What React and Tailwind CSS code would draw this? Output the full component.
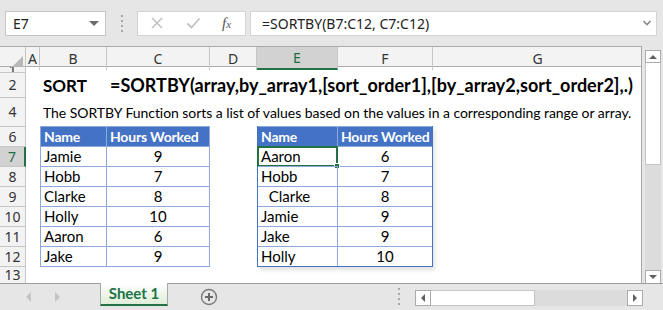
import React from 'react';

const COLS = 'grid-cols-[26px_14px_67px_103px_47px_81px_95px_209px]';
const ROWS = 'grid-rows-[6px_25px_29px_20px_20px_20px_20px_20px_20px_20px_17px]';
const ROW_LABELS = ['1', '2', '4', '6', '7', '8', '9', '10', '11', '12', '13'];
const COL_LABELS = ['A', 'B', 'C', 'D', 'E', 'F', 'G'];

const left = [
  ['Jamie', '9'],
  ['Hobb', '7'],
  ['Clarke', '8'],
  ['Holly', '10'],
  ['Aaron', '6'],
  ['Jake', '9'],
];

const right = [
  ['Aaron', '6'],
  ['Hobb', '7'],
  ['\u00a0\u00a0Clarke', '8'],
  ['Jamie', '9'],
  ['Jake', '9'],
  ['Holly', '10'],
];

const cellFont = "font-['Lato',sans-serif] text-[15px] text-black";
const headFont = "font-['Lato',sans-serif] font-bold text-[14px] tracking-[-0.2px] text-white";

function DataTable({ data, place, dark, selectFirst }) {
  const outer = dark ? 'border-[#4472c4] shadow-[2px_3px_4px_rgba(0,0,0,0.12)]' : 'border-[#8ea9db]';
  const cols = dark ? 'grid-cols-[80px_1fr]' : 'grid-cols-[66px_1fr]';
  return (
    <div className={`${place} grid ${cols} grid-rows-[repeat(7,20px)] border-l border-r border-b ${outer} -mt-px`}>
      <div className={`bg-[#4472c4] border-t border-r border-[#8ea9db] flex items-center pl-[3px] whitespace-nowrap ${headFont}`}>Name</div>
      <div className={`bg-[#4472c4] border-t border-[#8ea9db] flex items-center pl-[3px] whitespace-nowrap ${headFont}`}>Hours Worked</div>
      {data.map(([n, h], i) => (
        <React.Fragment key={i}>
          <div className={`relative border-t border-r border-[#8ea9db] flex items-center pl-[3px] ${cellFont}`}>
            {n}
            {selectFirst && i === 0 && (
              <div className="absolute -left-px -top-px -right-px -bottom-px border-2 border-[#217346]">
                <div className="absolute -right-[4px] -bottom-[4px] w-[6px] h-[6px] bg-[#217346] border border-white" />
              </div>
            )}
          </div>
          <div className={`border-t border-[#8ea9db] flex items-center justify-center ${cellFont}`}>{h}</div>
        </React.Fragment>
      ))}
    </div>
  );
}

function Dots() {
  return (
    <div className="flex flex-col gap-[3px]">
      <span className="w-[2px] h-[2px] bg-[#a8a8a8]" />
      <span className="w-[2px] h-[2px] bg-[#a8a8a8]" />
      <span className="w-[2px] h-[2px] bg-[#a8a8a8]" />
      <span className="w-[2px] h-[2px] bg-[#a8a8a8]" />
    </div>
  );
}

function FormulaBar() {
  return (
    <div className="h-[46px] flex items-center pl-[5px] pr-[6px] bg-[#e6e6e6] font-['Noto_Sans',sans-serif]">
      <div className="w-[101px] h-[25px] bg-white border border-[#c6c6c6] flex items-center justify-between pl-[7px] pr-[6px] text-[14px] text-[#222]">
        <span>E7</span>
        <span className="w-0 h-0 border-l-[5px] border-r-[5px] border-t-[5px] border-l-transparent border-r-transparent border-t-[#6a6a6a]" />
      </div>
      <div className="w-[31px] flex justify-center">
        <Dots />
      </div>
      <div className="w-[109px] h-[25px] bg-white border border-[#d4d4d4] flex items-center">
        <svg width="14" height="14" viewBox="0 0 14 14" className="ml-[12px]">
          <path d="M2 2 L12 12 M12 2 L2 12" stroke="#c2c2c2" strokeWidth="1.6" />
        </svg>
        <svg width="15" height="14" viewBox="0 0 15 14" className="ml-[22px]">
          <path d="M1.5 7.5 L5.5 11.5 L13.5 2.5" stroke="#c2c2c2" strokeWidth="1.8" fill="none" />
        </svg>
        <span className="ml-[21px] font-['Liberation_Serif',serif] italic text-[15px] text-[#555] leading-none">
          f<span className="text-[11px]">x</span>
        </span>
      </div>
      <div className="ml-[4px] flex-1 h-[25px] bg-white border border-[#d4d4d4] flex items-center justify-between pl-[11px] pr-[4px] text-[14px] text-[#222]">
        <span>=SORTBY(B7:C12, C7:C12)</span>
        <svg width="10" height="8" viewBox="0 0 10 8">
          <path d="M1.5 2 L5 5.5 L8.5 2" stroke="#888" strokeWidth="1.6" fill="none" />
        </svg>
      </div>
    </div>
  );
}

function VScroll() {
  return (
    <div className="w-[21px] bg-[#e6e6e6] flex flex-col pt-[4px] pl-[3px] pr-[2px]">
      <div className="h-[13px] bg-white border border-[#ababab] flex items-center justify-center">
        <span className="w-0 h-0 border-l-[4px] border-r-[4px] border-b-[4px] border-l-transparent border-r-transparent border-b-[#606060]" />
      </div>
      <div className="h-[102px] bg-white border-x border-b border-[#c4c4c4]" />
      <div className="flex-1 bg-[#dcdcdc]" />
      <div className="h-[14px] bg-white border border-[#ababab] flex items-center justify-center">
        <span className="w-0 h-0 border-l-[4px] border-r-[4px] border-t-[4px] border-l-transparent border-r-transparent border-t-[#606060]" />
      </div>
    </div>
  );
}

function Sheet() {
  return (
    <div className="w-[642px] border-r border-b border-[#a6a6a6] bg-white flex flex-col">
      <div className={`grid ${COLS} h-[21px] bg-[#f3f3f3] border-t border-b border-[#ababab] font-['Noto_Sans',sans-serif] text-[14px] text-[#333]`}>
        <div className="border-r border-[#c6c6c6] flex items-end justify-end pr-[2px] pb-[2px]">
          <svg width="12" height="12" viewBox="0 0 12 12">
            <polygon points="12,0 12,12 0,12" fill="#b8b8b8" />
          </svg>
        </div>
        {COL_LABELS.map((c) =>
          c === 'E' ? (
            <div key={c} className="bg-[#d2d2d2] border-r border-[#c6c6c6] border-b-2 border-b-[#217346] flex items-center justify-center text-[#1e6b41]">
              {c}
            </div>
          ) : (
            <div key={c} className="border-r border-[#c6c6c6] flex items-center justify-center last:border-r-0">
              {c}
            </div>
          )
        )}
      </div>
      <div className={`grid ${COLS} ${ROWS} flex-1 overflow-hidden`}>
        {ROW_LABELS.map((r, i) => (
          <div
            key={r}
            style={{ gridRow: i + 1, gridColumn: 1 }}
            className={`border-b font-['Noto_Sans',sans-serif] text-[14px] flex items-center justify-center overflow-hidden leading-none ${
              r === '7'
                ? 'bg-[#d2d2d2] border-r-2 border-r-[#217346] border-b-[#c6c6c6] text-[#1e6b41]'
                : 'bg-[#f3f3f3] border-r border-[#c6c6c6] text-[#333]'
            }`}
          >
            {r}
          </div>
        ))}
        <div className="row-start-2 col-start-3 flex items-center pl-[3px] font-['Lato',sans-serif] font-bold text-[17px] text-black whitespace-nowrap">
          SORT
        </div>
        <div className="row-start-2 col-start-4 col-span-5 flex items-center pl-[3px] font-['Lato',sans-serif] font-bold text-[18px] text-black whitespace-nowrap">
          =SORTBY(array,by_array1,[sort_order1],[by_array2,sort_order2],.)
        </div>
        <div className="row-start-3 col-start-3 col-span-6 flex items-center pl-[3px] font-['Lato',sans-serif] text-[14px] tracking-[-0.05px] text-black whitespace-nowrap">
          The SORTBY Function sorts a list of values based on the values in a corresponding range or array.
        </div>
        <DataTable data={left} place="row-start-4 row-span-7 col-start-3 col-span-2" />
        <DataTable data={right} place="row-start-4 row-span-7 col-start-6 col-span-2" dark selectFirst />
      </div>
    </div>
  );
}

function TabBar() {
  return (
    <div className="h-[26px] bg-[#e6e6e6] border-t border-[#9e9e9e] -mt-px flex items-start font-['Lato',sans-serif]">
      <div className="w-[100px] h-[25px] flex items-center">
        <span className="ml-[26px] w-0 h-0 border-t-[5px] border-b-[5px] border-r-[5px] border-t-transparent border-b-transparent border-r-[#c4c4c4]" />
        <span className="ml-[24px] w-0 h-0 border-t-[5px] border-b-[5px] border-l-[5px] border-t-transparent border-b-transparent border-l-[#c4c4c4]" />
      </div>
      <div className="w-[68px] h-[23px] -mt-px bg-gradient-to-b from-white to-[#dfeed8] border-x border-[#a8a8a8] border-b-2 border-b-[#217346] flex items-center justify-center text-[15px] font-bold text-[#217346]">
        Sheet 1
      </div>
      <div className="w-[247px] h-[25px] flex items-center">
        <svg width="18" height="18" viewBox="0 0 18 18" className="ml-[32px]">
          <circle cx="9" cy="9" r="7.5" stroke="#7a7a7a" strokeWidth="1.4" fill="none" />
          <path d="M9 5 V13 M5 9 H13" stroke="#6a6a6a" strokeWidth="2" />
        </svg>
        <div className="ml-auto mr-[15px]">
          <Dots />
        </div>
      </div>
      <div className="mt-[6px] w-[228px] h-[16px] flex bg-[#dcdcdc]">
        <div className="w-[16px] h-full bg-white border border-[#ababab] flex items-center justify-center">
          <span className="w-0 h-0 border-t-[4px] border-b-[4px] border-r-[4px] border-t-transparent border-b-transparent border-r-[#606060]" />
        </div>
        <div className="w-[104px] h-full bg-white border-y border-r border-[#c4c4c4]" />
        <div className="flex-1" />
        <div className="w-[16px] h-full bg-white border border-[#ababab] flex items-center justify-center">
          <span className="w-0 h-0 border-t-[4px] border-b-[4px] border-l-[4px] border-t-transparent border-b-transparent border-l-[#606060]" />
        </div>
      </div>
    </div>
  );
}

export default function App() {
  return (
    <div className="w-[663px] h-[310px] overflow-hidden bg-[#e6e6e6] flex flex-col">
      <FormulaBar />
      <div className="h-[238px] flex">
        <Sheet />
        <VScroll />
      </div>
      <TabBar />
    </div>
  );
}
